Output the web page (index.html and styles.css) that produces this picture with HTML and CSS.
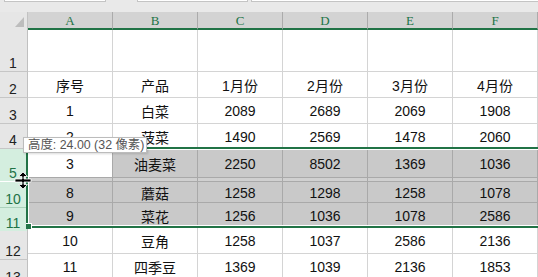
FILE: index.html
```html
<!DOCTYPE html>
<html>
<head>
<meta charset="utf-8">
<link rel="stylesheet" href="styles.css">
</head>
<body>
<div class="app">
  <div class="topbar">
    <span class="box b1"></span>
    <span class="box b2"></span>
    <span class="box b3"></span>
  </div>
  <div class="colheads">
    <div class="corner"><svg width="12" height="12" viewBox="0 0 12 12"><polygon points="11,1 11,11 2,11" fill="#bdbdbd"/></svg></div>
    <div class="ch">A</div><div class="ch">B</div><div class="ch">C</div><div class="ch">D</div><div class="ch">E</div><div class="ch">F</div>
  </div>
  <div class="sheet">
    <div class="rowheads">
      <div class="rh h1">1</div>
      <div class="rh h2">2</div>
      <div class="rh h3">3</div>
      <div class="rh h4">4</div>
      <div class="rh h5 on">5</div>
      <div class="rh h10 on">10</div>
      <div class="rh h11 on">11</div>
      <div class="rh h12">12</div>
      <div class="rh h13">13</div>
    </div>
    <div class="grid">
      <div class="row r1"><div class="c"></div><div class="c"></div><div class="c"></div><div class="c"></div><div class="c"></div><div class="c"></div></div>
      <div class="row r2"><div class="c">序号</div><div class="c">产品</div><div class="c">1月份</div><div class="c">2月份</div><div class="c">3月份</div><div class="c">4月份</div></div>
      <div class="row r3"><div class="c">1</div><div class="c">白菜</div><div class="c">2089</div><div class="c">2689</div><div class="c">2069</div><div class="c">1908</div></div>
      <div class="row r4"><div class="c">2</div><div class="c">菠菜</div><div class="c">1490</div><div class="c">2569</div><div class="c">1478</div><div class="c">2060</div></div>
      <div class="row r5 sel"><div class="c active">3</div><div class="c">油麦菜</div><div class="c">2250</div><div class="c">8502</div><div class="c">1369</div><div class="c">1036</div></div>
      <div class="row hid sel"><div class="c"></div><div class="c"></div><div class="c"></div><div class="c"></div><div class="c"></div><div class="c"></div></div>
      <div class="row r10 sel"><div class="c">8</div><div class="c">蘑菇</div><div class="c">1258</div><div class="c">1298</div><div class="c">1258</div><div class="c">1078</div></div>
      <div class="row r11 sel"><div class="c">9</div><div class="c">菜花</div><div class="c">1256</div><div class="c">1036</div><div class="c">1078</div><div class="c">2586</div></div>
      <div class="row r12"><div class="c">10</div><div class="c">豆角</div><div class="c">1258</div><div class="c">1037</div><div class="c">2586</div><div class="c">2136</div></div>
      <div class="row r13"><div class="c">11</div><div class="c">四季豆</div><div class="c">1369</div><div class="c">1039</div><div class="c">2136</div><div class="c">1853</div></div>
    </div>
  </div>
  <div class="selbox"></div>
  <div class="handle"></div>
  <div class="tip">高度: 24.00 (32 像素)</div>
  <svg class="cursor" width="18" height="19" viewBox="0 0 18 19"><path d="M9 1 L13.5 5.5 H10 V8 H17 V11 H10 V13.5 H13.5 L9 18 L4.5 13.5 H8 V11 H1 V8 H8 V5.5 H4.5 Z" fill="#000" stroke="#fff" stroke-width="0.8"/></svg>
</div>
</body>
</html>
```
FILE: styles.css
```css
html, body {
  margin: 0;
  padding: 0;
  background: #ffffff;
  overflow: hidden;
}
.app {
  position: relative;
  width: 538px;
  height: 277px;
  overflow: hidden;
  font-family: "Liberation Sans", "Noto Sans CJK SC", sans-serif;
}
.topbar {
  height: 12px;
  background: #e9e9e9;
  display: flex;
  align-items: flex-start;
}
.box {
  display: block;
  height: 1px;
  background: #fff;
  border: 1px solid #c4c4c4;
  border-top: none;
}
.b1 { margin-left: 4px; width: 100px; }
.b2 { margin-left: 31px; width: 109px; }
.b3 { margin-left: 3px; flex: 1; margin-right: -4px; }
.colheads {
  display: flex;
  height: 18px;
}
.corner {
  width: 28px;
  box-sizing: border-box;
  background: #e6e6e6;
  border-right: 1px solid #c2c2c2;
  display: flex;
  justify-content: flex-end;
  align-items: flex-end;
  padding: 0 2px 2px 0;
}
.corner svg { display: block; }
.ch {
  width: 85px;
  box-sizing: border-box;
  background: #d3d3d3;
  border-right: 1px solid #ababab;
  border-bottom: 2px solid #217346;
  color: #217346;
  font-family: "Liberation Serif", serif;
  font-size: 13px;
  display: flex;
  align-items: center;
  justify-content: center;
  padding-top: 1px;
}
.sheet {
  display: flex;
}
.rowheads {
  width: 28px;
  display: flex;
  flex-direction: column;
}
.rh {
  box-sizing: border-box;
  background: #e6e6e6;
  border-right: 1px solid #c0c0c0;
  border-bottom: 1px solid #c6c6c6;
  color: #222;
  font-size: 14px;
  display: flex;
  align-items: flex-end;
  justify-content: center;
  padding-bottom: 1px;
  line-height: 14px;
  padding-right: 1px;
}
.rh.on {
  background: #d4eedf;
  color: #217346;
  border-bottom-color: #aad2bb;
}
.h1 { height: 42px; }
.h2 { height: 26px; }
.h3 { height: 26px; }
.h4 { height: 25px; }
.h5 { height: 33px; border-bottom-color: #ffffff !important; }
.h10 { height: 26px; }
.h11 { height: 23px; border-bottom: none; }
.h12 { height: 29px; }
.h13 { height: 26px; }
.grid {
  display: flex;
  flex-direction: column;
}
.row {
  display: flex;
}
.c {
  width: 85px;
  box-sizing: border-box;
  border-right: 1px solid #d4d4d4;
  border-bottom: 1px solid #d4d4d4;
  display: flex;
  align-items: center;
  justify-content: center;
  font-size: 14px;
  color: #111;
  padding-top: 1px;
}
.r1 { height: 42px; }
.r2, .r3, .r4, .r12, .r13 { height: 26px; }
.r5 { height: 28px; }
.hid { height: 4px; }
.r10 { height: 21px; }
.r11 { height: 25px; }
.sel .c {
  background: #c9c9c9;
  border-color: #a9a9a9;
}
.hid .c { background: #d0d0d0; }
.sel .c.active {
  background: #ffffff;
}
.selbox {
  position: absolute;
  left: 26px;
  top: 147px;
  width: 540px;
  height: 81px;
  box-sizing: border-box;
  border-top: 2px solid #217346;
  border-bottom: 2px solid #217346;
  border-left: 2px solid #217346;
  box-shadow: inset 0 0 0 1px #ffffff;
}
.handle {
  position: absolute;
  left: 26px;
  top: 223px;
  width: 5px;
  height: 5px;
  background: #217346;
  border-top: 1px solid #fff;
  border-right: 1px solid #fff;
}
.tip {
  position: absolute;
  left: 23px;
  top: 137px;
  height: 16px;
  box-sizing: border-box;
  padding: 1px 2px 0 4px;
  background: #ffffff;
  border: 1px solid #bcbcbc;
  box-shadow: 1px 1px 2px rgba(0,0,0,0.15);
  font-size: 12.4px;
  line-height: 13px;
  color: #555;
  white-space: nowrap;
}
.cursor {
  position: absolute;
  left: 14px;
  top: 171px;
}
```
